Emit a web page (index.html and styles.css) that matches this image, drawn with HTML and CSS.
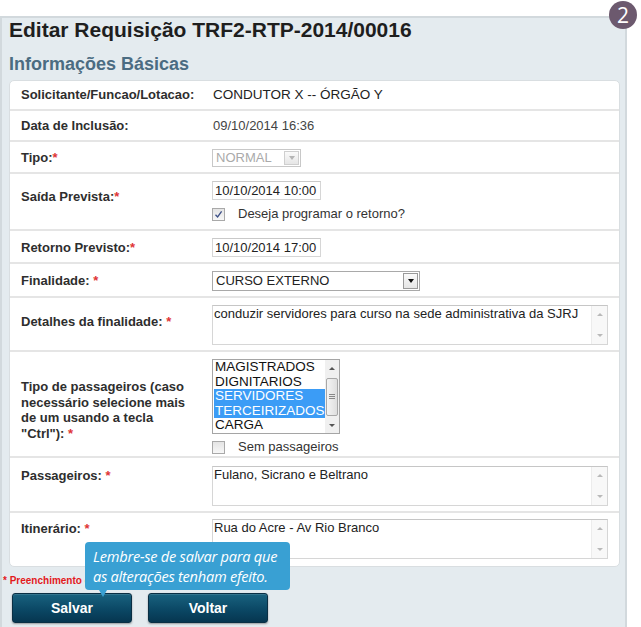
FILE: index.html
```html
<!DOCTYPE html>
<html lang="pt-BR">
<head>
<meta charset="utf-8">
<title>Editar Requisição</title>
<link rel="stylesheet" href="styles.css">
</head>
<body>
<div class="panel">
  <span class="badge">2</span>
  <h1 class="title">Editar Requisição TRF2-RTP-2014/00016</h1>
  <h2 class="subtitle">Informações Básicas</h2>
  <div class="form">
    <div class="row row-first">
      <div class="label">Solicitante/Funcao/Lotacao:</div>
      <div class="value value-strong">CONDUTOR X -- ÓRGÃO Y</div>
    </div>
    <div class="row row-a">
      <div class="label">Data de Inclusão:</div>
      <div class="value value-muted">09/10/2014 16:36</div>
    </div>
    <div class="row row-b">
      <div class="label">Tipo:<span class="req">*</span></div>
      <div class="value">
        <div class="select select-disabled">
          <span class="select-text">NORMAL</span>
          <span class="select-btn"><span class="tri-down"></span></span>
        </div>
      </div>
    </div>
    <div class="row row-saida">
      <div class="label label-saida">Saída Prevista:<span class="req">*</span></div>
      <div class="value stack">
        <div class="input">10/10/2014 10:00</div>
        <div class="check-line">
          <span class="checkbox"><svg viewBox="0 0 9 9" width="9" height="9"><path d="M1.5 4.8 L3.6 7 L7.6 1.4" fill="none" stroke="#3c4f86" stroke-width="1.3"/></svg></span>
          <span class="check-text">Deseja programar o retorno?</span>
        </div>
      </div>
    </div>
    <div class="row row-b">
      <div class="label">Retorno Previsto:<span class="req">*</span></div>
      <div class="value"><div class="input">10/10/2014 17:00</div></div>
    </div>
    <div class="row row-b">
      <div class="label">Finalidade: <span class="req">*</span></div>
      <div class="value">
        <div class="select select-wide">
          <span class="select-text">CURSO EXTERNO</span>
          <span class="select-btn select-btn-dark"><span class="tri-down"></span></span>
        </div>
      </div>
    </div>
    <div class="row row-b">
      <div class="label label-det">Detalhes da finalidade: <span class="req">*</span></div>
      <div class="value">
        <div class="textarea">
          <span class="ta-text">conduzir servidores para curso na sede administrativa da SJRJ</span>
          <span class="ta-scroll"><span class="tri-up-s"></span><span class="tri-down-s"></span></span>
        </div>
      </div>
    </div>
    <div class="row row-pass">
      <div class="label label-multi">Tipo de passageiros (caso necessário selecione mais de um usando a tecla "Ctrl"): <span class="req">*</span></div>
      <div class="value stack">
        <div class="listbox">
          <div class="options">
            <div class="opt">MAGISTRADOS</div>
            <div class="opt">DIGNITARIOS</div>
            <div class="opt opt-sel">SERVIDORES</div>
            <div class="opt opt-sel">TERCEIRIZADOS</div>
            <div class="opt">CARGA</div>
          </div>
          <div class="lb-scroll">
            <span class="lb-arrow"><span class="tri-up-s dark"></span></span>
            <span class="lb-track"><span class="lb-thumb"><span class="grip"></span></span></span>
            <span class="lb-arrow"><span class="tri-down-s dark"></span></span>
          </div>
        </div>
        <div class="check-line check-line-tight">
          <span class="checkbox"></span>
          <span class="check-text">Sem passageiros</span>
        </div>
      </div>
    </div>
    <div class="row row-top">
      <div class="label label-top">Passageiros: <span class="req">*</span></div>
      <div class="value">
        <div class="textarea">
          <span class="ta-text">Fulano, Sicrano e Beltrano</span>
          <span class="ta-scroll"><span class="tri-up-s"></span><span class="tri-down-s"></span></span>
        </div>
      </div>
    </div>
    <div class="row row-top row-last">
      <div class="label label-top">Itinerário: <span class="req">*</span></div>
      <div class="value">
        <div class="textarea">
          <span class="ta-text">Rua do Acre - Av Rio Branco</span>
          <span class="ta-scroll"><span class="tri-up-s"></span><span class="tri-down-s"></span></span>
        </div>
      </div>
    </div>
  </div>
  <p class="note">* Preenchimento obrigatório</p>
  <div class="actions">
    <button class="btn" type="button">Salvar</button>
    <button class="btn" type="button">Voltar</button>
    <div class="tip"><span class="tip-line">Lembre-se de salvar para que</span><span class="tip-line">as alterações tenham efeito.</span></div>
  </div>
</div>
</body>
</html>
```

FILE: styles.css
```css
* { box-sizing: border-box; }
html, body { margin: 0; padding: 0; background: #ffffff; overflow: hidden; }
body { font-family: "Liberation Sans", Arial, sans-serif; color: #333; }

.panel {
  position: relative;
  margin-top: 16px;
  width: 627px;
  background: #e4ebef;
  border: 2px solid #d2d9dd;
  padding: 0 5px 30px 7px;
}
.badge {
  position: absolute;
  top: -17px;
  right: -12px;
  width: 28px;
  height: 28px;
  border-radius: 50%;
  background: #6c596e;
  color: #fff;
  font-family: "Open Sans", "Noto Sans", sans-serif;
  font-size: 21px;
  line-height: 28px;
  text-align: center;
}
.title {
  margin: 0;
  padding-top: 0;
  font-size: 21px;
  line-height: 24px;
  font-weight: bold;
  color: #1e1e1e;
}
.subtitle {
  margin: 11px 0 0;
  font-size: 18px;
  line-height: 22px;
  font-weight: bold;
  color: #4b6c82;
}
.form {
  margin-top: 5px;
  background: #fff;
  border: 1px solid #d9dee1;
  border-radius: 5px;
}
.row {
  display: grid;
  grid-template-columns: 191px 1fr;
  align-items: center;
  padding: 7px 0 6px 11px;
  border-bottom: 2px solid #e5e5e5;
}
.row-first { padding: 6px 0 6px 11px; }
.row-a { padding: 7px 0 6px 11px; }
.row-b { padding: 7px 0 5px 11px; }
.row-saida { padding: 7px 0 7px 11px; }
.row-pass { padding: 7px 0 1px 11px; }
.row-top { padding: 8px 0 5px 11px; align-items: start; }
.row-last { padding: 6px 0 7px 11px; border-bottom: 0; }
.label {
  font-size: 13px;
  line-height: 16px;
  font-weight: bold;
  color: #2e2e2e;
  padding-right: 20px;
}
.label-saida { align-self: start; margin-top: 8px; }
.label-det { align-self: start; margin-top: 9px; }
.label-multi { line-height: 15.5px; margin-top: 6px; }
.label-top { margin-top: 2px; }
.req { color: #e03535; }
.value { font-size: 13px; line-height: 16px; color: #333; padding-right: 11px; }
.value-strong { font-size: 13.5px; color: #222; padding-left: 1px; }
.value-muted { color: #444; padding-left: 1px; }
.stack { display: flex; flex-direction: column; align-items: flex-start; }

.input {
  width: 109px;
  height: 19px;
  border: 1px solid #d6d6d6;
  border-top-color: #c9c9c9;
  padding: 0 2px;
  font-size: 13px;
  line-height: 17px;
  color: #222;
}
.check-line { display: flex; align-items: center; height: 16px; margin-top: 6px; }
.check-line-tight { margin-top: 5px; }
.checkbox {
  width: 13px;
  height: 13px;
  border: 1px solid #a9a9a9;
  background: linear-gradient(#e4e4e4, #f7f7f7);
  display: flex;
  align-items: center;
  justify-content: center;
}
.check-text { margin-left: 13px; font-size: 13px; color: #333; }

.select {
  display: flex;
  align-items: center;
  height: 18px;
  border: 1px solid #a9a9a9;
  font-size: 13px;
  color: #222;
}
.select-disabled { width: 89px; border-color: #c8c8c8; color: #aaa; }
.select-wide { width: 208px; height: 20px; }
.select-text { flex: 1; padding-left: 3px; line-height: 16px; }
.select-btn {
  width: 15px;
  height: 14px;
  margin-right: 1px;
  border: 1px solid #cfcfcf;
  background: linear-gradient(#fafafa, #e6e6e6);
  display: flex;
  align-items: center;
  justify-content: center;
}
.select-btn-dark { height: 16px; border-color: #9a9a9a; }
.tri-down {
  width: 0; height: 0;
  border-left: 3.5px solid transparent;
  border-right: 3.5px solid transparent;
  border-top: 4px solid #b5b5b5;
}
.select-btn-dark .tri-down { border-top-color: #111; }

.textarea {
  display: flex;
  width: 396px;
  height: 40px;
  border: 1px solid #d6d6d6;
  border-top-color: #c6c6c6;
}
.ta-text { flex: 1; padding: 0 1px; font-size: 13px; line-height: 16px; color: #222; }
.ta-scroll {
  width: 16px;
  border-left: 1px solid #ececec;
  background: #f8f8f8;
  display: flex;
  flex-direction: column;
  justify-content: space-between;
  align-items: center;
  padding: 7px 0 7px;
}
.tri-up-s, .tri-down-s {
  width: 0; height: 0;
  border-left: 3px solid transparent;
  border-right: 3px solid transparent;
}
.tri-up-s { border-bottom: 3px solid #b9b9b9; }
.tri-down-s { border-top: 3px solid #b9b9b9; }
.tri-up-s.dark { border-bottom-color: #555; }
.tri-down-s.dark { border-top-color: #555; }

.listbox {
  display: flex;
  width: 128px;
  height: 75px;
  border: 1px solid #a5a5a5;
  background: #fff;
}
.options { flex: 1; padding: 0 0 0 1px; }
.opt { font-size: 13.5px; line-height: 14.6px; color: #111; padding-left: 1px; white-space: nowrap; }
.opt-sel { background: #3b9cf6; color: #fff; }
.lb-scroll {
  width: 14px;
  display: flex;
  flex-direction: column;
  background: #f0f0f0;
}
.lb-arrow { height: 16px; display: flex; align-items: center; justify-content: center; }
.lb-track { flex: 1; display: flex; align-items: center; justify-content: center; }
.lb-thumb {
  width: 12px;
  height: 38px;
  border: 1px solid #a8a8a8;
  border-radius: 2px;
  background: linear-gradient(90deg, #f4f4f4, #dedede);
  display: flex;
  align-items: center;
  justify-content: center;
}
.grip {
  width: 6px;
  height: 5px;
  border-top: 1px solid #888;
  border-bottom: 1px solid #888;
  position: relative;
}
.grip::after {
  content: "";
  position: absolute;
  left: 0; right: 0; top: 1px;
  border-top: 1px solid #888;
}

.note {
  margin: 7px 0 0 -6px;
  font-size: 10px;
  line-height: 14px;
  font-weight: bold;
  color: #e3191c;
}
.actions {
  position: relative;
  display: flex;
  gap: 16px;
  margin-top: 5px;
  margin-left: 3px;
}
.btn {
  width: 120px;
  height: 30px;
  border: 1px solid #0a2f44;
  border-radius: 3px;
  background: linear-gradient(#19627f, #0b4865 55%, #063650);
  box-shadow: 0 1px 2px rgba(0,0,0,0.35), inset 0 1px 0 rgba(255,255,255,0.12);
  color: #fff;
  font-family: "Liberation Sans", Arial, sans-serif;
  font-size: 14px;
  font-weight: bold;
  padding: 0;
}
.tip {
  position: absolute;
  left: 73px;
  bottom: 3px;
  width: 205px;
  transform: translateY(-30px);
  padding: 4px 4px 4px 8px;
  background: #39a0d3;
  border-radius: 4px;
  color: #fff;
  font-family: "Open Sans", "Noto Sans", sans-serif;
  font-style: italic;
  font-size: 14.6px;
  line-height: 20px;
  letter-spacing: -0.25px;
  white-space: nowrap;
}
.tip-line { display: block; }
.tip::after {
  content: "";
  position: absolute;
  left: 14px;
  bottom: -7px;
  border-left: 4px solid transparent;
  border-right: 4px solid transparent;
  border-top: 7px solid #39a0d3;
}
```
